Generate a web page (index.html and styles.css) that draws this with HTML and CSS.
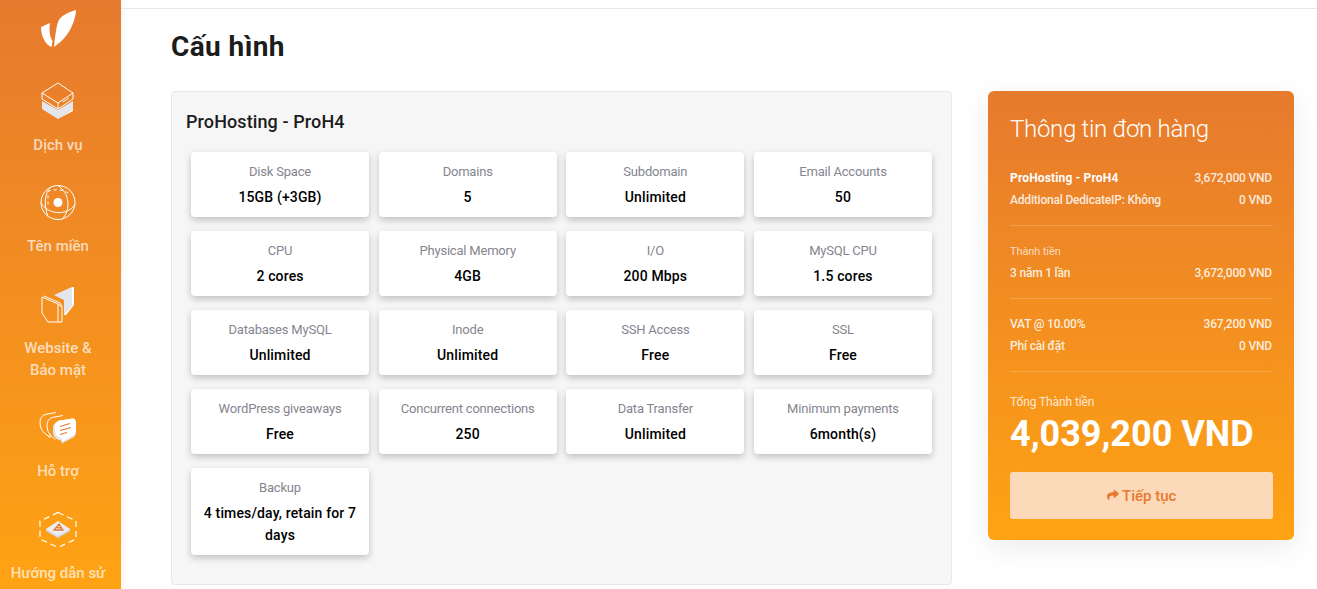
FILE: index.html
```html
<!DOCTYPE html>
<html lang="vi">
  <head>
    <meta charset="UTF-8" />
    <meta name="viewport" content="width=device-width, initial-scale=1.0" />
    <title>Cấu hình</title>
    <link rel="stylesheet" href="styles.css">
  </head>
  <body>
    <div class="sidebar">
      <a class="logo" href="#">
        <svg width="40" height="40" viewBox="0 0 40 40">
          <path fill="#fff" d="M38 1C31 3 24 6 21 11C18 16 17 30 16 38C23 33 29 27 33 19C36 13 38 6 38 1Z" />
          <path fill="#fff" d="M3 18L12 14C11 20 11.5 27 14.5 32L13.5 38C8 36 3 28 3 18Z" />
        </svg>
      </a>

      <a class="side-item" href="#">
        <svg class="side-icon" viewBox="0 0 40 40" fill="none" stroke="#fff" stroke-width="1">
          <path fill="#e4e6ee" stroke="none" d="M4 19L20 28L35 19V27L20 37L4 27Z" />
          <path fill="#fff" stroke="none" d="M20 37L35 27V29L20 37Z" />
          <path d="M20 1L35 11L20 21L4 11Z" />
          <path d="M4 11V17L20 27L35 17V11M20 21V27M25 20L31 16" />
        </svg>
        <span>Dịch vụ</span>
      </a>

      <a class="side-item" href="#">
        <svg class="side-icon" viewBox="0 -0.5 40 40" fill="none" stroke="#fff" stroke-width="1">
          <circle cx="20" cy="19" r="17" />
          <circle cx="20" cy="19" r="4.5" fill="#fff" stroke="none" />
          <path d="M3 19C8 30 28 34 37 21M20 2C32 10 33 26 24 36M13 3C6 10 6 22 10 33" />
          <path stroke-dasharray="3 3" d="M10 8C16 5 26 6 31 10M10 12V24" />
        </svg>
        <span>Tên miền</span>
      </a>

      <a class="side-item" href="#">
        <svg class="side-icon" viewBox="0 -1 40 40" fill="none" stroke="#fff" stroke-width="1">
          <path fill="#e4e6ee" stroke="none" d="M16 9L34 1V19L26 29V14Z" />
          <path fill="#fff" stroke="none" d="M34 1L36 1V19L28 29H26L34 19Z" />
          <path d="M4 11L20 18L24 21V36H10L4 27Z" />
          <path d="M6 10L22 17L24 21M20 18V36" />
        </svg>
        <span>Website &amp; Bảo mật</span>
      </a>

      <a class="side-item" href="#">
        <svg class="side-icon" viewBox="0 -1.5 40 40" fill="none" stroke="#fff" stroke-width="1">
          <path d="M18 3L7 5C4 6 2 9 2 13C2 18 4 22 7 24L12 28V25" />
          <path d="M25 6L14 8C11 9 9 12 9 16C9 21 11 25 14 27L17 30" />
          <path fill="#e4e6ee" stroke="none" d="M20 12L34 9C37 9 38 12 38 16V22C38 26 36 28 33 29L24 34L23 31C18 30 15 27 15 22V18C15 15 17 13 20 12Z" />
          <path fill="#fff" stroke="none" d="M21 11L35 9C37 9 38 11 38 14V20C38 24 36 26 33 27L24 32V29C20 28 17 25 17 21V17C17 14 18 12 21 11Z" />
          <path stroke="#e67a2e" stroke-width="1.2" d="M22 17L32 14M22 21L33 18M22 25L29 23" />
        </svg>
        <span>Hỗ trợ</span>
      </a>

      <a class="side-item" href="#">
        <svg class="side-icon" viewBox="0 -2 40 40" fill="none" stroke="#fff">
          <path stroke-width="1.2" stroke-dasharray="6 4" d="M20 0.5L38 9V27L20 35.5L2 27V9Z" />
          <path fill="#d5d8e2" stroke="none" d="M8 17V19L20 26L32 19V17Z" />
          <path fill="#eceef4" stroke="none" d="M20 9L32 17L20 24L8 17Z" />
          <path stroke="#e67a2e" stroke-width="1.3" d="M21 12L16 18H25ZM19 15.5L23 16" />
        </svg>
        <span>Hướng dẫn sử</span>
      </a>
    </div>

    <div class="main">
      <div class="topbar"></div>
      <div class="content">
        <h1>Cấu hình</h1>

        <div class="columns">
          <div class="panel">
            <h2>ProHosting - ProH4</h2>
            <div class="spec-grid">
              <div class="spec"><p class="spec-label">Disk Space</p><p class="spec-value">15GB (+3GB)</p></div>
              <div class="spec"><p class="spec-label">Domains</p><p class="spec-value">5</p></div>
              <div class="spec"><p class="spec-label">Subdomain</p><p class="spec-value">Unlimited</p></div>
              <div class="spec"><p class="spec-label">Email Accounts</p><p class="spec-value">50</p></div>
              <div class="spec"><p class="spec-label">CPU</p><p class="spec-value">2 cores</p></div>
              <div class="spec"><p class="spec-label">Physical Memory</p><p class="spec-value">4GB</p></div>
              <div class="spec"><p class="spec-label">I/O</p><p class="spec-value">200 Mbps</p></div>
              <div class="spec"><p class="spec-label">MySQL CPU</p><p class="spec-value">1.5 cores</p></div>
              <div class="spec"><p class="spec-label">Databases MySQL</p><p class="spec-value">Unlimited</p></div>
              <div class="spec"><p class="spec-label">Inode</p><p class="spec-value">Unlimited</p></div>
              <div class="spec"><p class="spec-label">SSH Access</p><p class="spec-value">Free</p></div>
              <div class="spec"><p class="spec-label">SSL</p><p class="spec-value">Free</p></div>
              <div class="spec"><p class="spec-label">WordPress giveaways</p><p class="spec-value">Free</p></div>
              <div class="spec"><p class="spec-label">Concurrent connections</p><p class="spec-value">250</p></div>
              <div class="spec"><p class="spec-label">Data Transfer</p><p class="spec-value">Unlimited</p></div>
              <div class="spec"><p class="spec-label">Minimum payments</p><p class="spec-value">6month(s)</p></div>
              <div class="spec"><p class="spec-label">Backup</p><p class="spec-value">4 times/day, retain for 7 days</p></div>
            </div>
          </div>

          <div class="order">
            <h3>Thông tin đơn hàng</h3>

            <div class="order-section order-first">
              <div class="order-row"><strong>ProHosting - ProH4</strong><span>3,672,000 VND</span></div>
              <div class="order-row"><span>Additional DedicateIP: Không</span><span>0 VND</span></div>
            </div>

            <div class="order-section">
              <div class="order-caption">Thành tiền</div>
              <div class="order-row"><span>3 năm 1 lần</span><span>3,672,000 VND</span></div>
            </div>

            <div class="order-section">
              <div class="order-row"><span>VAT @ 10.00%</span><span>367,200 VND</span></div>
              <div class="order-row"><span>Phí cài đặt</span><span>0 VND</span></div>
            </div>

            <div class="order-total">
              <div class="total-label">Tổng Thành tiền</div>
              <div class="total-amount">4,039,200 VND</div>
            </div>

            <button class="next-button">
              <svg width="12" height="12" viewBox="0 0 512 512"><path fill="#e67a2e" d="M503.691 189.836L327.687 37.851C312.281 24.546 288 35.347 288 56.015v80.053C127.371 137.907 0 170.1 0 322.326c0 61.441 39.581 122.309 83.333 154.132 13.653 9.931 33.111-2.533 28.077-18.631C66.066 312.814 132.917 274.316 288 272.085V360c0 20.7 24.3 31.453 39.687 18.164l176.004-152c11.071-9.562 11.086-26.753 0-36.328z" /></svg>
              Tiếp tục
            </button>
          </div>
        </div>
      </div>
    </div>
  </body>
</html>
```

FILE: styles.css
```css
* {
  margin: 0;
  padding: 0;
  box-sizing: border-box;
}

body {
  font-family: Roboto, "Noto Sans", sans-serif;
  background-color: #fff;
  color: #1c1c1c;
  display: flex;
  height: 100vh;
  overflow: hidden;
}

a {
  text-decoration: none;
  color: inherit;
}

/* Sidebar */
.sidebar {
  width: 121px;
  flex-shrink: 0;
  height: 100vh;
  overflow: hidden;
  padding-right: 5px;
  background: linear-gradient(180deg, #e67a2e 0%, #ffa313 100%);
  box-shadow: 0 0 12px rgba(0, 0, 0, 0.06);
  display: flex;
  flex-direction: column;
  align-items: center;
}

.logo {
  display: block;
  flex-shrink: 0;
  height: 82px;
  padding-top: 9px;
}

.side-item {
  display: flex;
  flex-direction: column;
  align-items: center;
  flex-shrink: 0;
  width: 100%;
  margin-bottom: 27.4px;
  text-align: center;
  color: rgba(255, 255, 255, 0.7);
  font-size: 15px;
  font-weight: 500;
  line-height: 22px;
}

.side-icon {
  width: 40px;
  height: 40px;
  margin-bottom: 12px;
}

.side-item span {
  width: 97px;
}

/* Main area */
.main {
  flex: 1;
  min-width: 0;
}

.topbar {
  height: 9px;
  border-bottom: 1px solid #e8e8e8;
}

.content {
  padding: 21px 23px 0 50px;
}

h1 {
  font-size: 28px;
  font-weight: 700;
  line-height: 34px;
  letter-spacing: 0.4px;
  margin-bottom: 27px;
}

.columns {
  display: flex;
  align-items: flex-start;
  gap: 36px;
}

/* Left panel */
.panel {
  flex: 1;
  min-width: 0;
  background-color: #f6f6f6;
  border: 1px solid #e8e8e8;
  border-radius: 4px;
  padding: 15px 19px 29px 19px;
}

.panel h2 {
  font-size: 18px;
  font-weight: 500;
  line-height: 30px;
  letter-spacing: 0.1px;
  margin: 0 0 15px -5px;
}

.spec-grid {
  display: grid;
  grid-template-columns: repeat(4, 1fr);
  gap: 14px 9.6px;
}

.spec {
  background: #fff;
  border-radius: 4px;
  padding: 9px 8px 9px;
  text-align: center;
  box-shadow: 0 3px 7px rgba(0, 0, 0, 0.22);
}

.spec-label {
  font-size: 13px;
  line-height: 22px;
  letter-spacing: -0.2px;
  color: #85858f;
  margin-bottom: 3px;
}

.spec-value {
  font-size: 14px;
  font-weight: 500;
  line-height: 22px;
  letter-spacing: 0.15px;
  color: #000;
}

/* Order summary */
.order {
  width: 306px;
  flex-shrink: 0;
  padding: 22px 21px 21px 22px;
  border-radius: 6px;
  color: #fff;
  background: linear-gradient(180deg, #e67a2e 0%, #ffa313 100%);
  box-shadow: 0 8px 30px rgba(0, 0, 0, 0.08);
}

.order h3 {
  font-size: 24px;
  font-weight: 300;
  line-height: 32px;
  letter-spacing: -0.3px;
  margin-bottom: 22px;
}

.order-section {
  padding: 14px 0;
  border-bottom: 1px solid rgba(255, 255, 255, 0.2);
}

.order-first {
  padding-top: 0;
}

.order-row {
  display: flex;
  justify-content: space-between;
  padding-right: 1px;
  font-size: 12px;
  font-weight: 500;
  line-height: 22px;
  letter-spacing: -0.2px;
  color: rgba(255, 255, 255, 0.85);
}

.order-row strong {
  font-weight: 700;
  letter-spacing: 0.15px;
  color: #fff;
}

.order-caption {
  padding-top: 1px;
  font-size: 11px;
  line-height: 21px;
  letter-spacing: -0.1px;
  color: rgba(255, 255, 255, 0.7);
}

.order-total {
  padding-top: 19px;
}

.total-label {
  font-size: 12px;
  line-height: 22px;
  letter-spacing: -0.1px;
  color: rgba(255, 255, 255, 0.8);
}

.total-amount {
  font-size: 36px;
  font-weight: 700;
  line-height: 42px;
}

.next-button {
  display: block;
  width: 100%;
  height: 47px;
  margin-top: 17px;
  border: none;
  border-radius: 3px;
  background-color: #fcd9b9;
  color: #e67a2e;
  font-family: inherit;
  font-size: 15px;
  font-weight: 500;
  cursor: pointer;
}
```
